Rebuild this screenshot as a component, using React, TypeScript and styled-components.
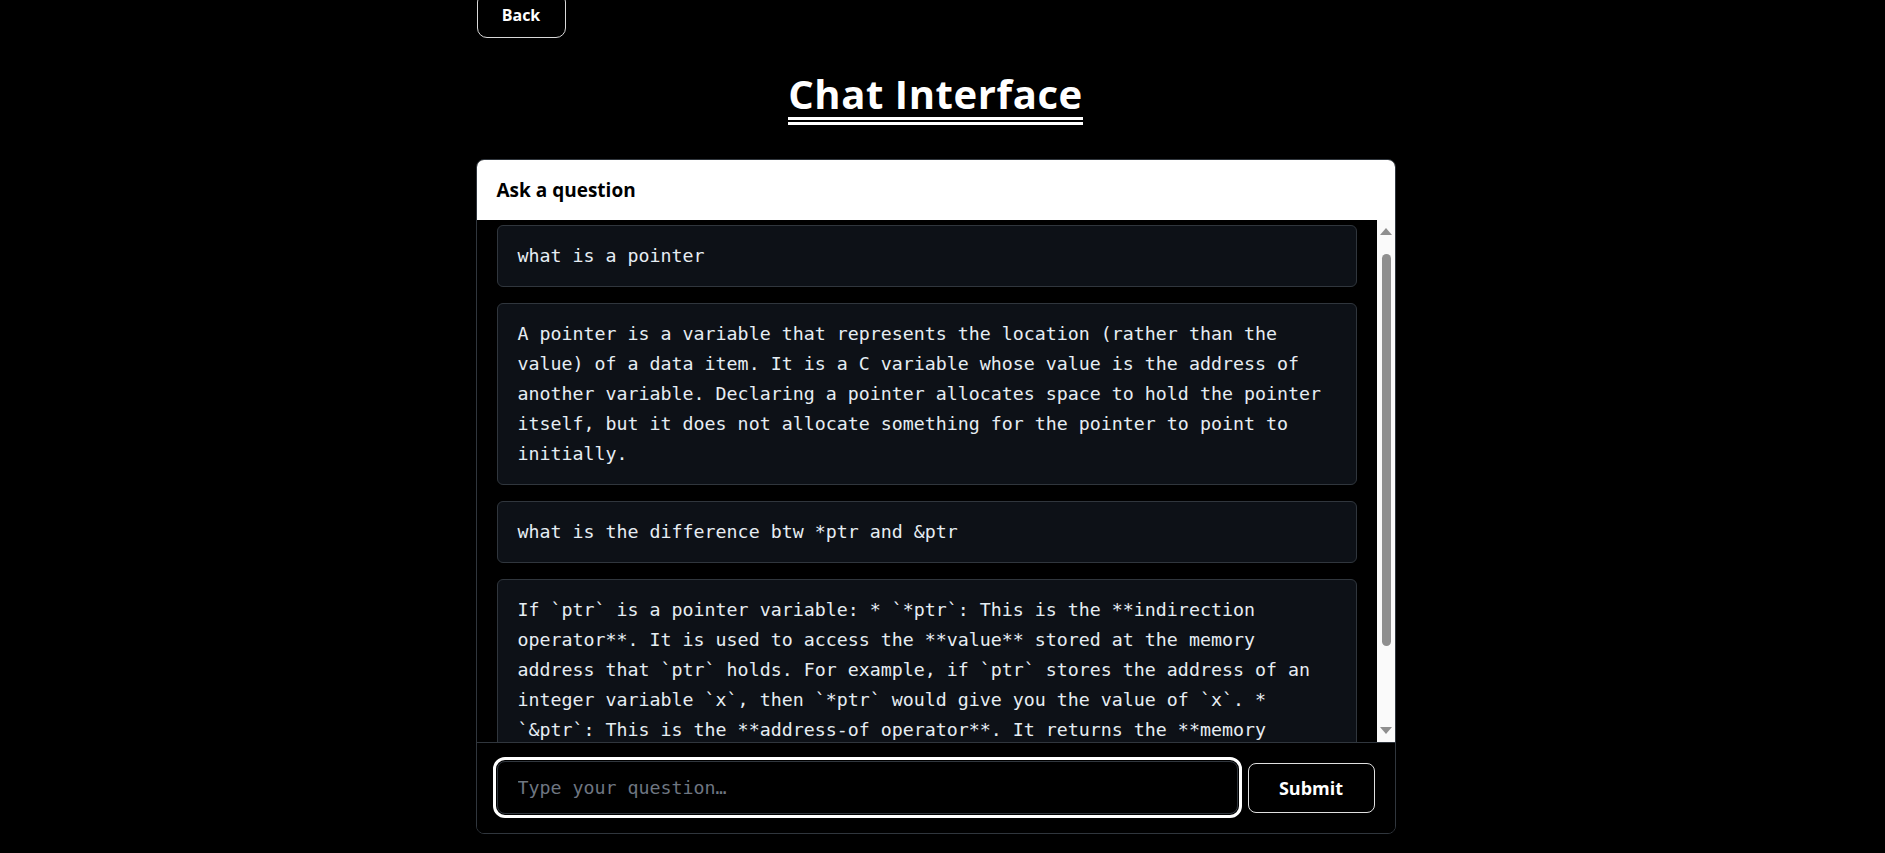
import React, { useLayoutEffect, useRef } from "react";
import styled, { createGlobalStyle } from "styled-components";

const GlobalStyle = createGlobalStyle`
  html, body {
    margin: 0;
    padding: 0;
    background: #000;
    color: #fff;
    overflow: hidden;
  }
  * { box-sizing: border-box; }
`;

const Page = styled.div`
  display: flex;
  justify-content: center;
  padding-right: 14px;
  min-height: 853px;
  background: #000;
`;

const Container = styled.div`
  width: 920px;
  display: flex;
  flex-direction: column;
`;

const BackButton = styled.button`
  align-self: flex-start;
  width: 89px;
  height: 46px;
  margin-top: -8px;
  margin-left: 1px;
  border: 1px solid #d9d9d9;
  border-radius: 10px;
  background: transparent;
  color: #fff;
  font-family: "Open Sans", "Noto Sans", sans-serif;
  font-weight: 700;
  font-size: 16px;
  cursor: pointer;
`;

const Title = styled.h1`
  margin: 33px 0 34px;
  align-self: center;
  font-family: "Open Sans", "Noto Sans", sans-serif;
  font-weight: 700;
  font-size: 40px;
  line-height: 46px;
  letter-spacing: 0.6px;
  color: #fff;
  border-bottom: 8px double #fff;
`;

const Card = styled.section`
  border: 1px solid #30363d;
  border-radius: 8px;
  overflow: hidden;
  background: #000;
  display: flex;
  flex-direction: column;
`;

const CardHeader = styled.div`
  height: 60px;
  background: #fff;
  color: #000;
  display: flex;
  align-items: center;
  padding: 0 20px;
  font-family: "Open Sans", "Noto Sans", sans-serif;
  font-weight: 700;
  font-size: 19px;
`;

const MessagesArea = styled.div`
  height: 522px;
  display: flex;
  background: #000;
`;

const MessageList = styled.div`
  flex: 1;
  min-width: 0;
  overflow: hidden;
  padding: 24px 20px 24px 20px;
  display: flex;
  flex-direction: column;
  gap: 16px;
`;

const ScrollBar = styled.div`
  width: 18px;
  flex: none;
  background: #fafafa;
  display: flex;
  flex-direction: column;
`;

const ScrollArrow = styled.div<{ $dir: "up" | "down" }>`
  height: 18px;
  display: flex;
  justify-content: center;
  align-items: ${(p) => (p.$dir === "up" ? "flex-end" : "flex-start")};
  padding: ${(p) => (p.$dir === "up" ? "0 0 3px" : "3px 0 0")};

  &::before {
    content: "";
    width: 0;
    height: 0;
    border-left: 6px solid transparent;
    border-right: 6px solid transparent;
    ${(p) =>
      p.$dir === "up"
        ? "border-bottom: 7px solid #8f8f8f;"
        : "border-top: 7px solid #8f8f8f;"}
  }
`;

const ScrollTrack = styled.div`
  flex: 1;
  padding-top: 16px;
`;

const ScrollThumb = styled.div`
  width: 9px;
  height: 392px;
  margin-left: 5px;
  border-radius: 5px;
  background: #8f8f8f;
`;

const Message = styled.div`
  flex: none;
  background: #0d1117;
  border: 1px solid #30363d;
  border-radius: 6px;
  padding: 15px 20px;
  color: #e6edf3;
  font-family: "DejaVu Sans Mono", monospace;
  font-size: 18.3px;
  line-height: 30px;
  white-space: pre-wrap;
`;

const Footer = styled.form`
  border-top: 1px solid #30363d;
  padding: 18px 20px 19px;
  display: flex;
  align-items: center;
  gap: 10px;
  background: #000;
`;

const Input = styled.input`
  flex: 1;
  height: 53px;
  min-width: 0;
  background: #000;
  border: 1px solid #30363d;
  border-radius: 8px;
  outline: 3px solid #fff;
  outline-offset: 1px;
  padding: 0 20px;
  color: #e6edf3;
  caret-color: #fff;
  font-family: "DejaVu Sans Mono", monospace;
  font-size: 18.3px;

  &::placeholder {
    color: #6e7681;
  }
`;

const SubmitButton = styled.button`
  width: 127px;
  height: 50px;
  flex: none;
  background: #000;
  border: 1px solid #e0e0e0;
  border-radius: 8px;
  color: #fff;
  font-family: "Open Sans", "Noto Sans", sans-serif;
  font-weight: 700;
  font-size: 18px;
  cursor: pointer;
`;

const messages = [
  "what is a pointer",
  "A pointer is a variable that represents the location (rather than the value) of a data item. It is a C variable whose value is the address of another variable. Declaring a pointer allocates space to hold the pointer itself, but it does not allocate something for the pointer to point to initially.",
  "what is the difference btw *ptr and &ptr",
  "If `ptr` is a pointer variable: * `*ptr`: This is the **indirection operator**. It is used to access the **value** stored at the memory address that `ptr` holds. For example, if `ptr` stores the address of an integer variable `x`, then `*ptr` would give you the value of `x`. * `&ptr`: This is the **address-of operator**. It returns the **memory address** of the variable `ptr` itself (where `ptr` is stored). In short: `*ptr` is the value pointed to, `&ptr` is the address of `ptr`.",
];

export default function App() {
  const listRef = useRef<HTMLDivElement>(null);

  useLayoutEffect(() => {
    if (listRef.current) listRef.current.scrollTop = 19;
  }, []);

  return (
    <>
      <GlobalStyle />
      <Page>
        <Container>
          <BackButton type="button">Back</BackButton>
          <Title>Chat Interface</Title>
          <Card>
            <CardHeader>Ask a question</CardHeader>
            <MessagesArea>
              <MessageList ref={listRef}>
                {messages.map((m, i) => (
                  <Message key={i}>{m}</Message>
                ))}
              </MessageList>
              <ScrollBar aria-hidden="true">
                <ScrollArrow $dir="up" />
                <ScrollTrack>
                  <ScrollThumb />
                </ScrollTrack>
                <ScrollArrow $dir="down" />
              </ScrollBar>
            </MessagesArea>
            <Footer onSubmit={(e) => e.preventDefault()}>
              <Input type="text" placeholder="Type your question…" autoFocus />
              <SubmitButton type="submit">Submit</SubmitButton>
            </Footer>
          </Card>
        </Container>
      </Page>
    </>
  );
}
